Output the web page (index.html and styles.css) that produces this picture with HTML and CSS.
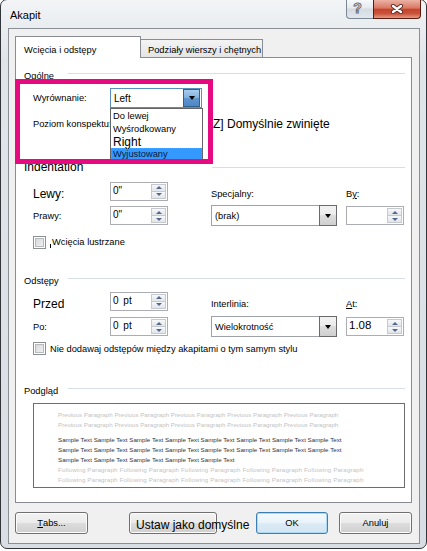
FILE: index.html
```html
<!DOCTYPE html>
<html lang="pl">
<head>
    <meta charset="UTF-8">
    <meta name="viewport" content="width=device-width, initial-scale=1.0">
    <title>Akapit</title>
    <link rel="stylesheet" href="styles.css">
</head>
<body>

<div class="window">
    <div class="titlebar">
        <span class="title">Akapit</span>
        <div class="caption-buttons">
            <div class="cap-btn cap-help">?</div>
            <div class="cap-btn cap-close">
                <svg width="14" height="10" viewBox="0 0 14 10">
                    <path d="M3 2 L11 8 M11 2 L3 8" stroke="#5b2a22" stroke-width="4.2" stroke-linecap="round"/>
                    <path d="M3 2 L11 8 M11 2 L3 8" stroke="#fff" stroke-width="2.4" stroke-linecap="round"/>
                </svg>
            </div>
        </div>
    </div>

    <div class="client">
        <div class="tabs">
            <div class="tab tab-active">Wcięcia i odstępy</div>
            <div class="tab">Podziały wierszy i chętnych</div>
        </div>

        <div class="panel">
            <!-- Ogólne -->
            <div class="group-head">
                <span class="group-title">Ogólne</span>
                <div class="group-line"></div>
            </div>
            <div class="fields general">
                <div class="general-row">
                    <span class="label">Wyrównanie:</span>
                    <div class="combo combo-open">
                        <span class="combo-value">Left</span>
                        <span class="combo-btn"></span>
                        <ul class="combo-list">
                            <li>Do lewej</li>
                            <li>Wyśrodkowany</li>
                            <li class="item-big">Right</li>
                            <li class="item-selected">Wyjustowany</li>
                        </ul>
                    </div>
                </div>
                <div class="general-row general-row-second">
                    <span class="label">Poziom konspektu:</span>
                    <span></span>
                    <span class="big-text">Z] Domyślnie zwinięte</span>
                </div>
            </div>

            <!-- Wcięcia -->
            <div class="group-head group-head-big">
                <span class="group-title">Indentation</span>
                <div class="group-line group-line-late"></div>
            </div>
            <div class="fields field-grid field-grid-indent">
                <span class="row-label big-text">Lewy:</span>
                <div class="spin"><span class="spin-value">0"</span><span class="spin-arrows"><span class="spin-up"></span><span class="spin-down"></span></span></div>
                <span class="row-label">Specjalny:</span>
                <span class="row-label">B<u>y</u>:</span>

                <span class="label">Prawy:</span>
                <div class="spin"><span class="spin-value">0"</span><span class="spin-arrows"><span class="spin-up"></span><span class="spin-down"></span></span></div>
                <div class="combo combo-wide"><span class="combo-value">(brak)</span><span class="combo-btn"></span></div>
                <div class="spin"><span class="spin-value"></span><span class="spin-arrows"><span class="spin-up"></span><span class="spin-down"></span></span></div>
            </div>
            <div class="fields check-row check-row-indent">
                <span class="checkbox"></span>
                <span><span class="accel-mark"></span>Wcięcia lustrzane</span>
            </div>

            <!-- Odstępy -->
            <div class="group-head group-head-spacing">
                <span class="group-title">Odstępy</span>
                <div class="group-line"></div>
            </div>
            <div class="fields field-grid field-grid-spacing">
                <span class="row-label big-text">Przed</span>
                <div class="spin"><span class="spin-value">0 pt</span><span class="spin-arrows"><span class="spin-up"></span><span class="spin-down"></span></span></div>
                <span class="row-label">Interlinia:</span>
                <span class="row-label"><u>A</u>t:</span>

                <span class="label">Po:</span>
                <div class="spin"><span class="spin-value">0 pt</span><span class="spin-arrows"><span class="spin-up"></span><span class="spin-down"></span></span></div>
                <div class="combo combo-wide"><span class="combo-value">Wielokrotność</span><span class="combo-btn"></span></div>
                <div class="spin"><span class="spin-value spin-value-big">1.08</span><span class="spin-arrows"><span class="spin-up"></span><span class="spin-down"></span></span></div>
            </div>
            <div class="fields check-row check-row-spacing">
                <span class="checkbox"></span>
                <span>Nie dodawaj odstępów między akapitami o tym samym stylu</span>
            </div>

            <!-- Podgląd -->
            <div class="group-head group-head-preview">
                <span class="group-title">Podgląd</span>
                <div class="group-line"></div>
            </div>
            <div class="fields preview">
                <div class="preview-line preview-other">Previous Paragraph Previous Paragraph Previous Paragraph Previous Paragraph Previous Paragraph</div>
                <div class="preview-line preview-other">Previous Paragraph Previous Paragraph Previous Paragraph Previous Paragraph Previous Paragraph</div>
                <div class="preview-line preview-sample preview-gap">Sample Text Sample Text Sample Text Sample Text Sample Text Sample Text Sample Text Sample Text</div>
                <div class="preview-line preview-sample">Sample Text Sample Text Sample Text Sample Text Sample Text Sample Text Sample Text Sample Text</div>
                <div class="preview-line preview-sample">Sample Text Sample Text Sample Text Sample Text Sample Text</div>
                <div class="preview-line preview-other preview-following">Following Paragraph Following Paragraph Following Paragraph Following Paragraph Following Paragraph</div>
                <div class="preview-line preview-other preview-following">Following Paragraph Following Paragraph Following Paragraph Following Paragraph Following Paragraph</div>
            </div>

            <!-- ramka zaznaczenia wokół wyrównania -->
            <div class="highlight-box"></div>
        </div>

        <div class="buttons">
            <div class="btn btn-tabs"><u>T</u>abs...</div>
            <div class="btn btn-default-set">Ustaw jako domyślne</div>
            <div class="btn btn-ok">OK</div>
            <div class="btn btn-cancel">Anuluj</div>
        </div>
    </div>
</div>

</body>
</html>
```

FILE: styles.css
```css
* {
    box-sizing: border-box;
}

body {
    margin: 0;
    background: #fff;
    font-family: "Liberation Sans", Arial, sans-serif;
    font-size: 9.3px;
    color: #000;
    overflow: hidden;
}

/* okno */
.window {
    width: 427px;
    height: 550px;
    margin-top: -1px;
    border: 1px solid #32363b;
    border-radius: 7px;
    background: linear-gradient(#f2f4f6, #e0e5ea 60px, #d9dee4);
    padding: 0 6px 4px 7px;
    display: flex;
    flex-direction: column;
}

.titlebar {
    height: 28px;
    flex: none;
    display: flex;
    align-items: flex-start;
}

.title {
    font-size: 11px;
    line-height: 12px;
    margin: 9px 0 0 2px;
}

.caption-buttons {
    margin-left: auto;
    margin-right: -1px;
    display: flex;
}

.cap-btn {
    height: 19px;
    display: flex;
    align-items: center;
    justify-content: center;
}

.cap-help {
    width: 27px;
    border: 1px solid #7d8792;
    border-top: none;
    border-right: none;
    border-radius: 0 0 0 4px;
    background: linear-gradient(#f7f9fb, #e6eaee 45%, #d4dae1 50%, #e2e7ed);
    font-size: 14px;
    font-weight: bold;
    color: #fafafa;
    -webkit-text-stroke: 1px #6a7078;
    padding: 0 5px 2px 0;
}

.cap-close {
    width: 48px;
    border: 1px solid #5a1b12;
    border-top: none;
    border-radius: 0 0 4px 0;
    background: linear-gradient(#ebb2a5, #da7862 45%, #c5442b 52%, #ca513a 75%, #e39b83);
}

.client {
    flex: 1;
    border: 1px solid #8a8f96;
    background: #f0f0f0;
    padding: 7px 7px 0 6px;
}

/* zakładki */
.tabs {
    display: flex;
    align-items: flex-end;
    height: 21px;
}

.tab {
    width: 123px;
    height: 18px;
    margin-left: -1px;
    border: 1px solid #898c95;
    border-bottom: none;
    padding: 5px 0 0 7px;
    background: linear-gradient(#f4f4f4, #e4e4e4);
    white-space: nowrap;
}

.tab-active {
    width: 126px;
    height: 22px;
    margin-left: 0;
    margin-bottom: -1px;
    padding: 8px 0 0 8px;
    background: #fff;
    position: relative;
    z-index: 1;
}

.panel {
    height: 446px;
    border: 1px solid #898c95;
    background: #fff;
    padding: 0 6px 0 8px;
    position: relative;
}

/* nagłówki grup */
.group-head {
    display: flex;
    height: 12px;
    line-height: 12px;
    margin-top: 12px;
}

.group-title {
    min-width: 44px;
    white-space: nowrap;
}

.group-line {
    flex: 1;
    height: 1px;
    margin-top: 3px;
    background: #d5dfe5;
}

.group-head-big {
    height: 14px;
    line-height: 14px;
    margin-top: 26px;
    font-size: 12px;
}

.group-head-big .group-line {
    margin-top: 7px;
}

.group-line-late {
    margin-left: 129px;
}

.group-head-spacing {
    margin-top: 26px;
}

.group-head-preview {
    margin-top: 30px;
}

.fields {
    margin-left: 9px;
}

.label {
    white-space: nowrap;
}

.big-text {
    font-size: 12px;
}

/* Ogólne */
.general {
    margin-top: 6px;
}

.general-row {
    display: grid;
    grid-template-columns: 77px 103px auto;
    align-items: center;
    height: 20px;
}

.general-row-second {
    margin-top: 6px;
}

/* siatka pól */
.field-grid {
    display: grid;
    grid-template-columns: 77px 101px 135px 58px;
    grid-template-rows: 20px 21px;
    row-gap: 4px;
    align-items: center;
}

.field-grid-indent {
    margin-top: 7px;
}

.field-grid-spacing {
    margin-top: 4px;
    row-gap: 5px;
}

.row-label {
    align-self: end;
    line-height: 14px;
    white-space: nowrap;
}

.spin {
    width: 58px;
    height: 19px;
    border: 1px solid #abadb3;
    background: #fff;
    display: flex;
}

.spin-value {
    flex: 1;
    padding: 2px 0 0 2px;
    font-size: 10px;
    word-spacing: 2px;
}

.spin-value-big {
    font-size: 11.5px;
    padding-top: 1px;
}

.spin-arrows {
    width: 16px;
    display: flex;
    flex-direction: column;
    padding: 1px 1px 1px 0;
}

.spin-up,
.spin-down {
    flex: 1;
    border: 1px solid #c6cad0;
    background: linear-gradient(#f7f8f9, #e2e5e9);
    display: flex;
    align-items: center;
    justify-content: center;
}

.spin-down {
    border-top: none;
}

.spin-up::after {
    content: "";
    border-left: 3px solid transparent;
    border-right: 3px solid transparent;
    border-bottom: 3px solid #55698c;
}

.spin-down::after {
    content: "";
    border-left: 3px solid transparent;
    border-right: 3px solid transparent;
    border-top: 3px solid #55698c;
}

/* listy rozwijane */
.combo {
    height: 21px;
    border: 1px solid #9ea2a7;
    background: #fff;
    display: flex;
    align-items: center;
    position: relative;
}

.combo-wide {
    width: 126px;
}

.combo-value {
    flex: 1;
    padding-left: 3px;
    white-space: nowrap;
}

.combo-btn {
    width: 18px;
    height: 21px;
    margin-right: -1px;
    border: 1px solid #6a6a6a;
    background: linear-gradient(#f2f2f2, #ebebeb 50%, #dddddd 50%, #cfcfcf);
    display: flex;
    align-items: center;
    justify-content: center;
}

.combo-btn::after {
    content: "";
    border-left: 3.5px solid transparent;
    border-right: 3.5px solid transparent;
    border-top: 4px solid #000;
}

.combo-open {
    width: 92px;
    height: 20px;
    border-color: #5a8fbd;
    font-size: 10px;
}

.combo-open .combo-btn {
    height: 18px;
    width: 17px;
    margin-right: 1px;
    border-color: #2c628b;
    background: linear-gradient(#a9cdee, #7fb0e0 50%, #5d95cf 50%, #4f88c6);
}

.combo-list {
    position: absolute;
    top: calc(100% + 1px);
    left: -1px;
    width: 93px;
    margin: 0;
    padding: 1px 0 0;
    list-style: none;
    border: 1px solid #646464;
    background: #fff;
    font-size: 9.3px;
    z-index: 2;
}

.combo-list li {
    height: 13px;
    line-height: 13px;
    padding-left: 2px;
}

.combo-list .item-big {
    height: 12px;
    line-height: 12px;
    font-size: 12px;
}

.combo-list .item-selected {
    background: #3399ff;
    color: #0c1a3a;
    outline: 1px dotted #b98e4a;
    outline-offset: -1px;
}

/* pola wyboru */
.check-row {
    display: flex;
    align-items: center;
    gap: 4px;
    height: 13px;
    white-space: nowrap;
}

.check-row-indent {
    margin-top: 10px;
}

.check-row-spacing {
    margin-top: 5px;
}

.checkbox {
    width: 13px;
    height: 13px;
    flex: none;
    border: 1px solid #8e8f8f;
    background: linear-gradient(135deg, #cfd2d6, #f7f7f7);
    box-shadow: inset 0 0 0 1px #fff, inset 0 0 0 2px #b6b9bd;
}

.accel-mark {
    display: inline-block;
    width: 1px;
    height: 4px;
    margin-right: 1px;
    background: #000;
    vertical-align: -3px;
}

/* podgląd */
.preview {
    margin-top: 6px;
    width: 372px;
    height: 85px;
    border: 1px solid #6d6d6d;
    padding: 6px 0 0 24px;
    font-size: 6.2px;
    line-height: 10px;
    white-space: nowrap;
}

.preview-other {
    color: #c3c3c3;
}

.preview-following {
    letter-spacing: 0.15px;
}

.preview-sample {
    color: #333;
}

.preview-gap {
    margin-top: 5px;
}

.highlight-box {
    position: absolute;
    left: -1px;
    top: 21px;
    width: 198px;
    height: 85px;
    border: 5px solid #e6097f;
    z-index: 3;
}

/* przyciski */
.buttons {
    display: flex;
    margin-top: 9px;
    height: 22px;
}

.btn {
    height: 22px;
    border: 1px solid #707070;
    border-radius: 3px;
    background: linear-gradient(#f2f2f2, #ebebeb 50%, #dddddd 50%, #cfcfcf);
    box-shadow: inset 0 0 0 1px #fcfcfc;
    display: flex;
    align-items: center;
    justify-content: center;
    white-space: nowrap;
}

.btn-tabs {
    width: 73px;
}

.btn-default-set {
    width: 88px;
    margin-left: 41px;
    justify-content: flex-start;
    align-items: flex-start;
    padding: 5px 0 0 6px;
    font-size: 12px;
    line-height: 14px;
}

.btn-ok {
    width: 72px;
    margin-left: 39px;
    border-color: #3c7fb1;
    background: linear-gradient(#f4fafd, #e8f3fa 50%, #dcebf5 50%, #d2e5f2);
    box-shadow: inset 0 0 0 1px #a9d9f2;
}

.btn-cancel {
    width: 73px;
    margin-left: 11px;
}
```
